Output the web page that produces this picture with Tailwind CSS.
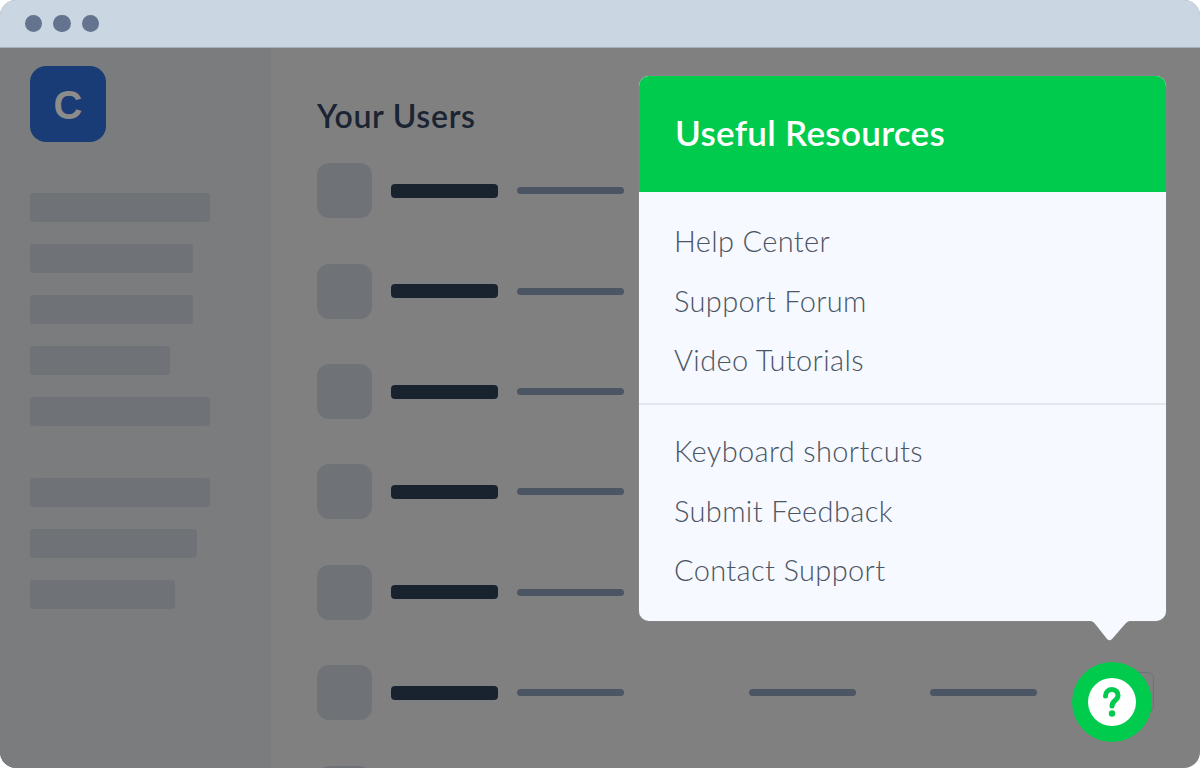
<!DOCTYPE html>
<html lang="en">
  <head>
    <meta charset="UTF-8" />
    <title>Useful Resources</title>
    <script src="https://cdn.jsdelivr.net/npm/@tailwindcss/browser@4"></script>
  </head>
  <body class="bg-white font-['Lato',sans-serif]">
    <div class="relative w-[1200px] h-[768px] overflow-hidden rounded-[16px] flex flex-col bg-[#808080]">
      <!-- Title bar -->
      <div class="h-[48px] shrink-0 bg-[#cbd6e3] border-b border-[#a9b0ba] flex items-center gap-[11px] pl-[24.500px]">
        <span class="w-[17.500px] h-[17.500px] rounded-full bg-[#64748f]"></span>
        <span class="w-[17.500px] h-[17.500px] rounded-full bg-[#64748f]"></span>
        <span class="w-[17.500px] h-[17.500px] rounded-full bg-[#64748f]"></span>
      </div>

      <div class="flex flex-1 min-h-0">
        <!-- Sidebar -->
        <div class="w-[271px] shrink-0 bg-[#7b7c7e] pl-[30px] pt-[18px]">
          <div class="w-[76px] h-[76px] rounded-[16px] bg-[#193b76] flex items-center justify-center pt-[1px] text-[#8c8c8c] text-[40px] font-bold leading-none font-['Liberation_Sans',sans-serif]">C</div>
          <div class="mt-[51px] flex flex-col gap-[22px]">
            <div class="w-[180px] h-[29px] rounded-[3px] bg-[#6f7378]"></div>
            <div class="w-[163px] h-[29px] rounded-[3px] bg-[#6f7378]"></div>
            <div class="w-[163px] h-[29px] rounded-[3px] bg-[#6f7378]"></div>
            <div class="w-[140px] h-[29px] rounded-[3px] bg-[#6f7378]"></div>
            <div class="w-[180px] h-[29px] rounded-[3px] bg-[#6f7378]"></div>
          </div>
          <div class="mt-[52px] flex flex-col gap-[22px]">
            <div class="w-[180px] h-[29px] rounded-[3px] bg-[#6f7378]"></div>
            <div class="w-[167px] h-[29px] rounded-[3px] bg-[#6f7378]"></div>
            <div class="w-[145px] h-[29px] rounded-[3px] bg-[#6f7378]"></div>
          </div>
        </div>

        <!-- Users table -->
        <div class="flex-1 pl-[46px] pt-[48px]">
          <h2 class="text-[32px] leading-[40px] font-semibold tracking-[0.7px] text-[#1a2433]">Your Users</h2>
          <div class="mt-[27.300px] flex flex-col gap-[45.400px]">
            <div class="flex items-center h-[55px]">
              <div class="w-[55px] h-[55px] rounded-[12px] bg-[#6f7378]"></div>
              <div class="ml-[19px] w-[107px] h-[14px] rounded-[4px] bg-[#19222f]"></div>
              <div class="ml-[19px] w-[107px] h-[7px] rounded-full bg-[#4b5563]"></div>
            </div>
            <div class="flex items-center h-[55px]">
              <div class="w-[55px] h-[55px] rounded-[12px] bg-[#6f7378]"></div>
              <div class="ml-[19px] w-[107px] h-[14px] rounded-[4px] bg-[#19222f]"></div>
              <div class="ml-[19px] w-[107px] h-[7px] rounded-full bg-[#4b5563]"></div>
            </div>
            <div class="flex items-center h-[55px]">
              <div class="w-[55px] h-[55px] rounded-[12px] bg-[#6f7378]"></div>
              <div class="ml-[19px] w-[107px] h-[14px] rounded-[4px] bg-[#19222f]"></div>
              <div class="ml-[19px] w-[107px] h-[7px] rounded-full bg-[#4b5563]"></div>
            </div>
            <div class="flex items-center h-[55px]">
              <div class="w-[55px] h-[55px] rounded-[12px] bg-[#6f7378]"></div>
              <div class="ml-[19px] w-[107px] h-[14px] rounded-[4px] bg-[#19222f]"></div>
              <div class="ml-[19px] w-[107px] h-[7px] rounded-full bg-[#4b5563]"></div>
            </div>
            <div class="flex items-center h-[55px]">
              <div class="w-[55px] h-[55px] rounded-[12px] bg-[#6f7378]"></div>
              <div class="ml-[19px] w-[107px] h-[14px] rounded-[4px] bg-[#19222f]"></div>
              <div class="ml-[19px] w-[107px] h-[7px] rounded-full bg-[#4b5563]"></div>
            </div>
            <div class="flex items-center h-[55px]">
              <div class="w-[55px] h-[55px] rounded-[12px] bg-[#6f7378]"></div>
              <div class="ml-[19px] w-[107px] h-[14px] rounded-[4px] bg-[#19222f]"></div>
              <div class="ml-[19px] w-[107px] h-[7px] rounded-full bg-[#4b5563]"></div>
              <div class="ml-[125px] w-[107px] h-[7px] rounded-full bg-[#4b5563]"></div>
              <div class="ml-[74px] w-[107px] h-[7px] rounded-full bg-[#4b5563]"></div>
              <div class="ml-[77px] w-[40px] h-[41px] rounded-[6px] border border-[#6f7378]"></div>
            </div>
            <div class="flex items-center h-[55px]">
              <div class="w-[55px] h-[55px] rounded-[12px] bg-[#6f7378]"></div>
            </div>
          </div>
        </div>
      </div>

      <!-- Resources popover -->
      <div class="absolute left-[639px] top-[76px] w-[527px] h-[545px] rounded-[10px] bg-[#f6f9ff] shadow-[0_0_1px_#b0b4bc]">
        <div class="h-[116px] rounded-t-[10px] bg-[#00cb4d] flex items-center pl-[36px] pb-[4px] text-white text-[35px] font-semibold tracking-[0.3px] leading-none">Useful Resources</div>
        <div class="pt-[19px] pb-[13.500px] pl-[35px] border-b-2 border-[#e3e6ec] text-[29px] font-light tracking-[0.35px] text-[#4b5563]">
          <div class="h-[59.500px] leading-[59.500px]">Help Center</div>
          <div class="h-[59.500px] leading-[59.500px]">Support Forum</div>
          <div class="h-[59.500px] leading-[59.500px]">Video Tutorials</div>
        </div>
        <div class="pt-[16px] pl-[35px] text-[29px] font-light tracking-[0.35px] text-[#4b5563]">
          <div class="h-[59.500px] leading-[59.500px]">Keyboard shortcuts</div>
          <div class="h-[59.500px] leading-[59.500px]">Submit Feedback</div>
          <div class="h-[59.500px] leading-[59.500px]">Contact Support</div>
        </div>
        <svg class="absolute left-[446px] top-[544px]" width="50" height="24" viewBox="0 0 50 24">
          <path d="M0 0 H50 C46 0 43 1 41 3 L27 19 Q24.500 21.500 22 19 L11 5 C9 2 6 0 0 0 Z" fill="#f6f9ff" />
        </svg>
      </div>

      <!-- Help button -->
      <div class="absolute left-[1072px] top-[662px] w-[80px] h-[80px] rounded-full bg-[#00cb4d] flex items-center justify-center">
        <div class="w-[48px] h-[48px] rounded-full bg-white flex items-center justify-center">
          <svg width="48" height="48" viewBox="0 0 48 48" fill="none">
            <path d="M17.500 18 C17.500 14 20.500 11.500 24 11.500 C27.800 11.500 30 14.300 30 17.500 C30 22.500 24 22.500 24 28" stroke="#00cb4d" stroke-width="5" stroke-linecap="round" />
            <circle cx="24" cy="35.500" r="3.200" fill="#00cb4d" />
          </svg>
        </div>
      </div>
    </div>
  </body>
</html>
